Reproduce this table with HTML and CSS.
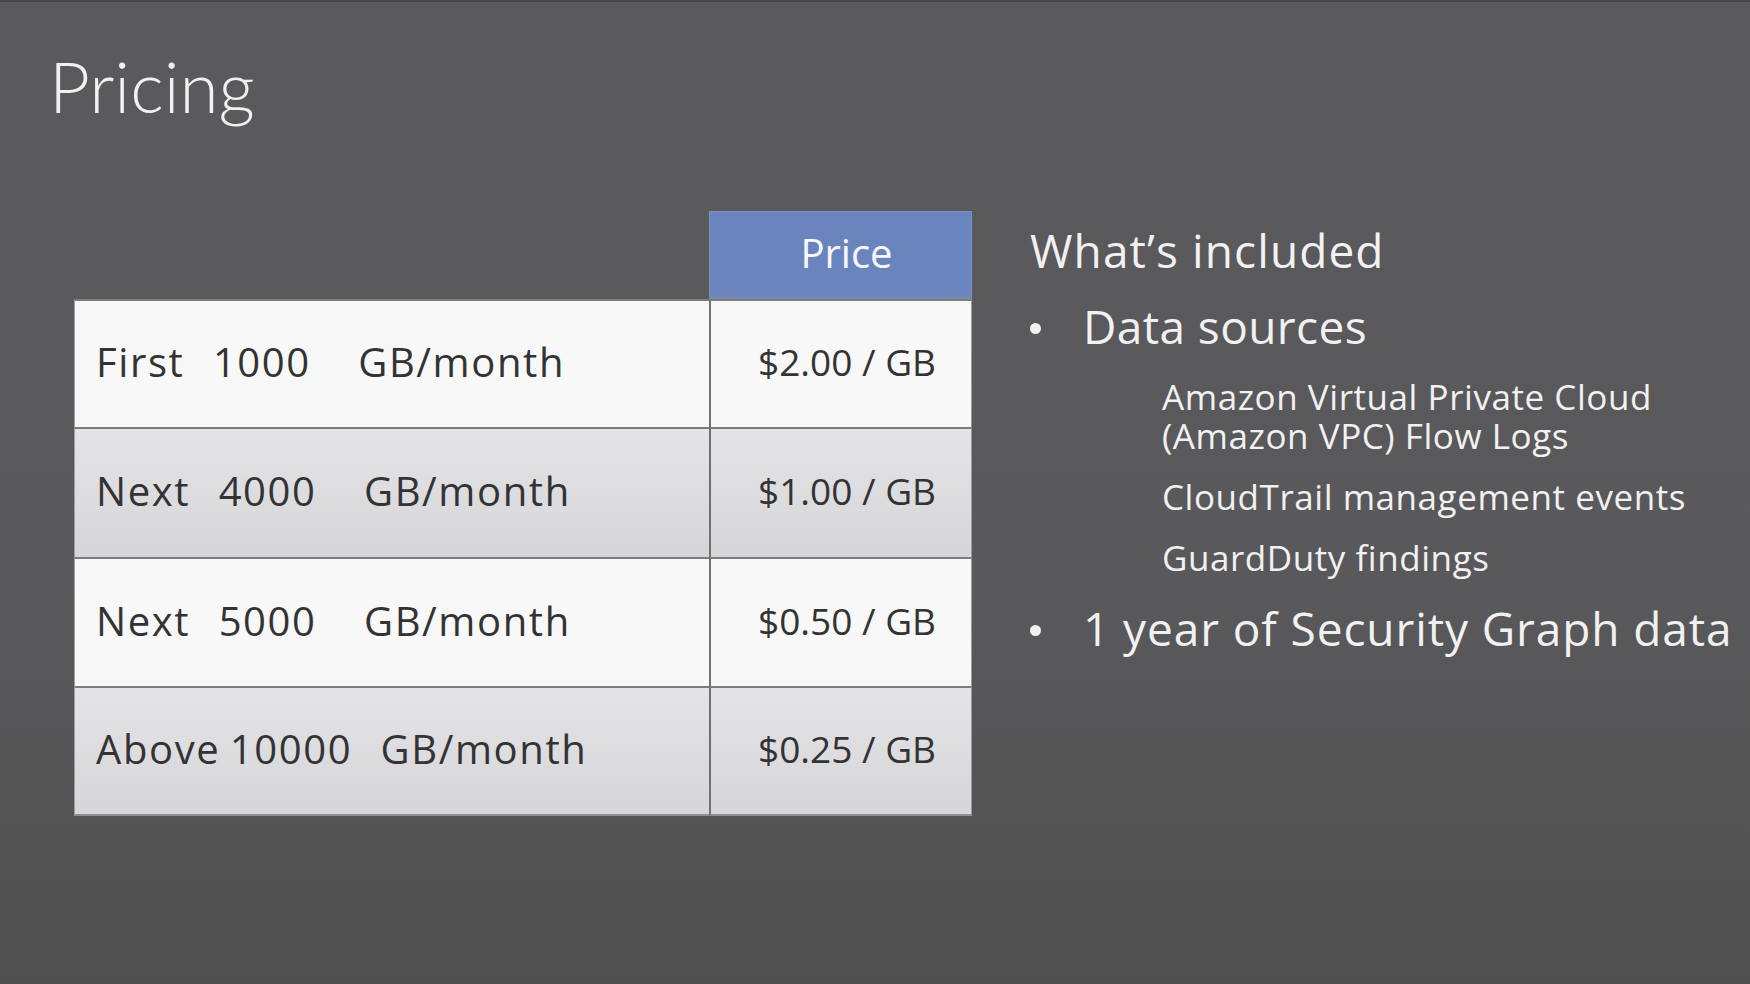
FILE: index.html
```html
<!DOCTYPE html>
<html lang="en">
<head>
<meta charset="utf-8">
<title>Pricing</title>
<link rel="stylesheet" href="styles.css">
</head>
<body>
<div class="slide">
  <h1 class="title">Pricing</h1>
  <div class="content">
    <div class="pricing-table">
      <div class="corner"></div>
      <div class="th">Price</div>

      <div class="td label">First   1000     GB/month</div>
      <div class="td price">$2.00 / GB</div>

      <div class="td label alt">Next   4000     GB/month</div>
      <div class="td price alt">$1.00 / GB</div>

      <div class="td label">Next   5000     GB/month</div>
      <div class="td price">$0.50 / GB</div>

      <div class="td label alt last">Above 10000   GB/month</div>
      <div class="td price alt last">$0.25 / GB</div>
    </div>

    <div class="included">
      <h2 class="included-title">What’s included</h2>
      <div class="item item-first"><span class="bullet"></span><span class="item-text">Data sources</span></div>
      <ul class="sources">
        <li>Amazon Virtual Private Cloud<br>(Amazon VPC) Flow Logs</li>
        <li>CloudTrail management events</li>
        <li>GuardDuty findings</li>
      </ul>
      <div class="item item-last"><span class="bullet"></span><span class="item-text">1 year of Security Graph data</span></div>
    </div>
  </div>
</div>
</body>
</html>
```

FILE: styles.css
```css
html, body {
  margin: 0;
  padding: 0;
}

body {
  background: #59585a;
  font-family: "Open Sans", "Liberation Sans", sans-serif;
}

.slide {
  width: 1750px;
  height: 984px;
  box-sizing: border-box;
  border-top: 2px solid #464547;
  background: linear-gradient(#5a595b 0%, #59585a 60%, #505051 100%);
  overflow: hidden;
}

.title {
  margin: 48px 0 0 49px;
  font-family: "Lato", "Open Sans", sans-serif;
  font-weight: 300;
  font-size: 71px;
  line-height: 71px;
  color: #f1f1f1;
}

.content {
  display: flex;
  align-items: flex-start;
  margin-top: 90px;
  padding-left: 74px;
  gap: 58px;
}

/* ---------- table ---------- */
.pricing-table {
  display: grid;
  grid-template-columns: 635px 263px;
  grid-template-rows: 88px 128px 130px 129px 130px;
  flex: none;
}

.corner {
  background: transparent;
}

.th {
  display: flex;
  align-items: center;
  justify-content: center;
  box-sizing: border-box;
  padding: 0 0 5px 12px;
  background: #6a85bd;
  border: 1px solid #7990c4;
  border-bottom: 2px solid #7d8aa6;
  color: #f7f8fb;
  font-size: 40px;
}

.td {
  display: flex;
  align-items: center;
  box-sizing: border-box;
  padding-bottom: 5px;
  background: #f8f8f8;
  color: #333334;
  border-top: 2px solid #7c7c7c;
}

.td.alt {
  background: linear-gradient(#e4e3e5, #d6d6d8);
}

.td.last {
  border-bottom: 2px solid #8e8e8f;
}

.label {
  padding-left: 21px;
  border-left: 1px solid #a0a0a0;
  font-size: 40px;
  letter-spacing: 1.6px;
  word-spacing: -2.5px;
  white-space: pre;
}

.price {
  justify-content: center;
  padding-left: 12px;
  border-left: 2px solid #707070;
  border-right: 1px solid #9a9a9a;
  font-size: 37px;
}

/* ---------- included list ---------- */
.included {
  color: #f1f1f1;
  white-space: nowrap;
}

.included-title {
  margin: 11px 0 0 0;
  font-size: 46px;
  font-weight: 400;
  line-height: 56px;
  letter-spacing: 1.1px;
}

.item {
  display: flex;
  align-items: flex-start;
  font-size: 46px;
  line-height: 56px;
}

.item-first {
  margin-top: 20px;
  letter-spacing: 0.4px;
}

.item-last {
  margin-top: 23px;
  letter-spacing: 0.9px;
}

.bullet {
  flex: none;
  width: 11px;
  height: 11px;
  margin: 25px 42px 0 0;
  border-radius: 50%;
  background: #f1f1f1;
}

.sources {
  list-style: none;
  margin: 23px 0 0 0;
  padding: 0 0 0 132px;
  font-size: 35px;
  line-height: 39px;
  letter-spacing: 0.55px;
}

.sources li + li {
  margin-top: 22px;
}
```
